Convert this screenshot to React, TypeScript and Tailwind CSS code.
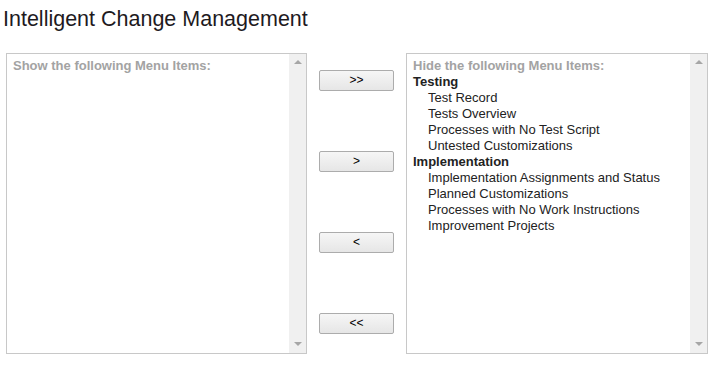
import React from "react";

type Group = { label: string; items: string[] };

const groups: Group[] = [
  {
    label: "Testing",
    items: ["Test Record", "Tests Overview", "Processes with No Test Script", "Untested Customizations"],
  },
  {
    label: "Implementation",
    items: [
      "Implementation Assignments and Status",
      "Planned Customizations",
      "Processes with No Work Instructions",
      "Improvement Projects",
    ],
  },
];

function ScrollBar() {
  return (
    <div className="w-[17px] bg-[#f0f0f0] flex flex-col items-center justify-between pt-[6px] pb-[7px]">
      <div className="w-0 h-0 border-l-[4px] border-r-[4px] border-b-[4px] border-l-transparent border-r-transparent border-b-[#a6a6a6]" />
      <div className="w-0 h-0 border-l-[4px] border-r-[4px] border-t-[4px] border-l-transparent border-r-transparent border-t-[#a6a6a6]" />
    </div>
  );
}

function ListBox({ title, data, width }: { title: string; data: Group[]; width: string }) {
  return (
    <div className={`${width} h-[301px] border border-[#c8c8c8] flex bg-white`}>
      <div className="flex-1 pt-[4px] pl-[6px] text-[13px] leading-[16px]">
        <div className="font-bold text-[#a3a3a3]">{title}</div>
        {data.map((g) => (
          <div key={g.label}>
            <div className="font-bold text-[#222]">{g.label}</div>
            {g.items.map((it) => (
              <div key={it} className="pl-[15px] text-[#222]">
                {it}
              </div>
            ))}
          </div>
        ))}
      </div>
      <ScrollBar />
    </div>
  );
}

function Btn({ label }: { label: string }) {
  return (
    <button className="w-[75px] h-[21px] border border-[#acacac] rounded-[2px] bg-linear-to-b from-[#f6f6f6] to-[#e6e6e6] text-[12px] leading-[19px] text-black">
      {label}
    </button>
  );
}

export default function App() {
  return (
    <div className="w-[718px] h-[366px] bg-white font-['Liberation_Sans',Arial,sans-serif] overflow-hidden">
      <h1 className="pt-[7px] pl-[3px] text-[21.5px] leading-[24px] font-normal text-[#1e1a1e]">
        Intelligent Change Management
      </h1>
      <div className="flex mt-[22px] pl-[6px]">
        <ListBox title="Show the following Menu Items:" data={[]} width="w-[301px]" />
        <div className="w-[75px] ml-[12px] mr-[12px] flex flex-col gap-[60px] pt-[17px]">
          <Btn label=">>" />
          <Btn label=">" />
          <Btn label="<" />
          <Btn label="<<" />
        </div>
        <ListBox title="Hide the following Menu Items:" data={groups} width="w-[302px]" />
      </div>
    </div>
  );
}
